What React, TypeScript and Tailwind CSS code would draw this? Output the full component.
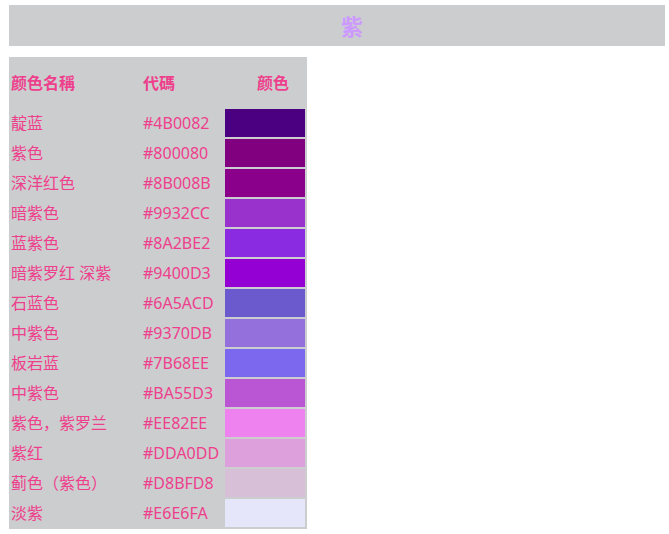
import React from 'react';

interface ColorRow {
  name: string;
  hex: string;
}

const ROWS: ColorRow[] = [
  { name: '靛蓝', hex: '#4B0082' },
  { name: '紫色', hex: '#800080' },
  { name: '深洋红色', hex: '#8B008B' },
  { name: '暗紫色', hex: '#9932CC' },
  { name: '蓝紫色', hex: '#8A2BE2' },
  { name: '暗紫罗红 深紫', hex: '#9400D3' },
  { name: '石蓝色', hex: '#6A5ACD' },
  { name: '中紫色', hex: '#9370DB' },
  { name: '板岩蓝', hex: '#7B68EE' },
  { name: '中紫色', hex: '#BA55D3' },
  { name: '紫色，紫罗兰', hex: '#EE82EE' },
  { name: '紫红', hex: '#DDA0DD' },
  { name: '蓟色（紫色）', hex: '#D8BFD8' },
  { name: '淡紫', hex: '#E6E6FA' },
];

export default function App() {
  return (
    <div className="min-h-[534px] bg-white pt-[5px] pl-[9px] pr-[4px] font-['Noto_Sans','Noto_Sans_CJK_SC',sans-serif]">
      <div className="h-[41px] bg-[#cccdcf] flex items-center justify-center pl-[30px]">
        <h1 className="text-[22px] font-bold leading-none text-[#cc99ff]">紫</h1>
      </div>

      <table className="mt-[11px] bg-[#cccdcf] border-separate border-spacing-[2px] text-[16px] text-[#ee3f8c]">
        <thead>
          <tr className="h-[48px]">
            <th className="w-[130px] p-0 text-left font-bold">颜色名稱</th>
            <th className="w-[80px] p-0 text-left font-bold">代碼</th>
            <th className="w-[80px] p-0 text-left font-bold pl-[32px]">颜色</th>
          </tr>
        </thead>
        <tbody>
          {ROWS.map((row, i) => (
            <tr key={i} className="h-[28px]">
              <td className="p-0 whitespace-nowrap leading-none">{row.name}</td>
              <td className="p-0 whitespace-nowrap leading-none">{row.hex}</td>
              <td className="p-0" style={{ backgroundColor: row.hex }}></td>
            </tr>
          ))}
        </tbody>
      </table>
    </div>
  );
}
